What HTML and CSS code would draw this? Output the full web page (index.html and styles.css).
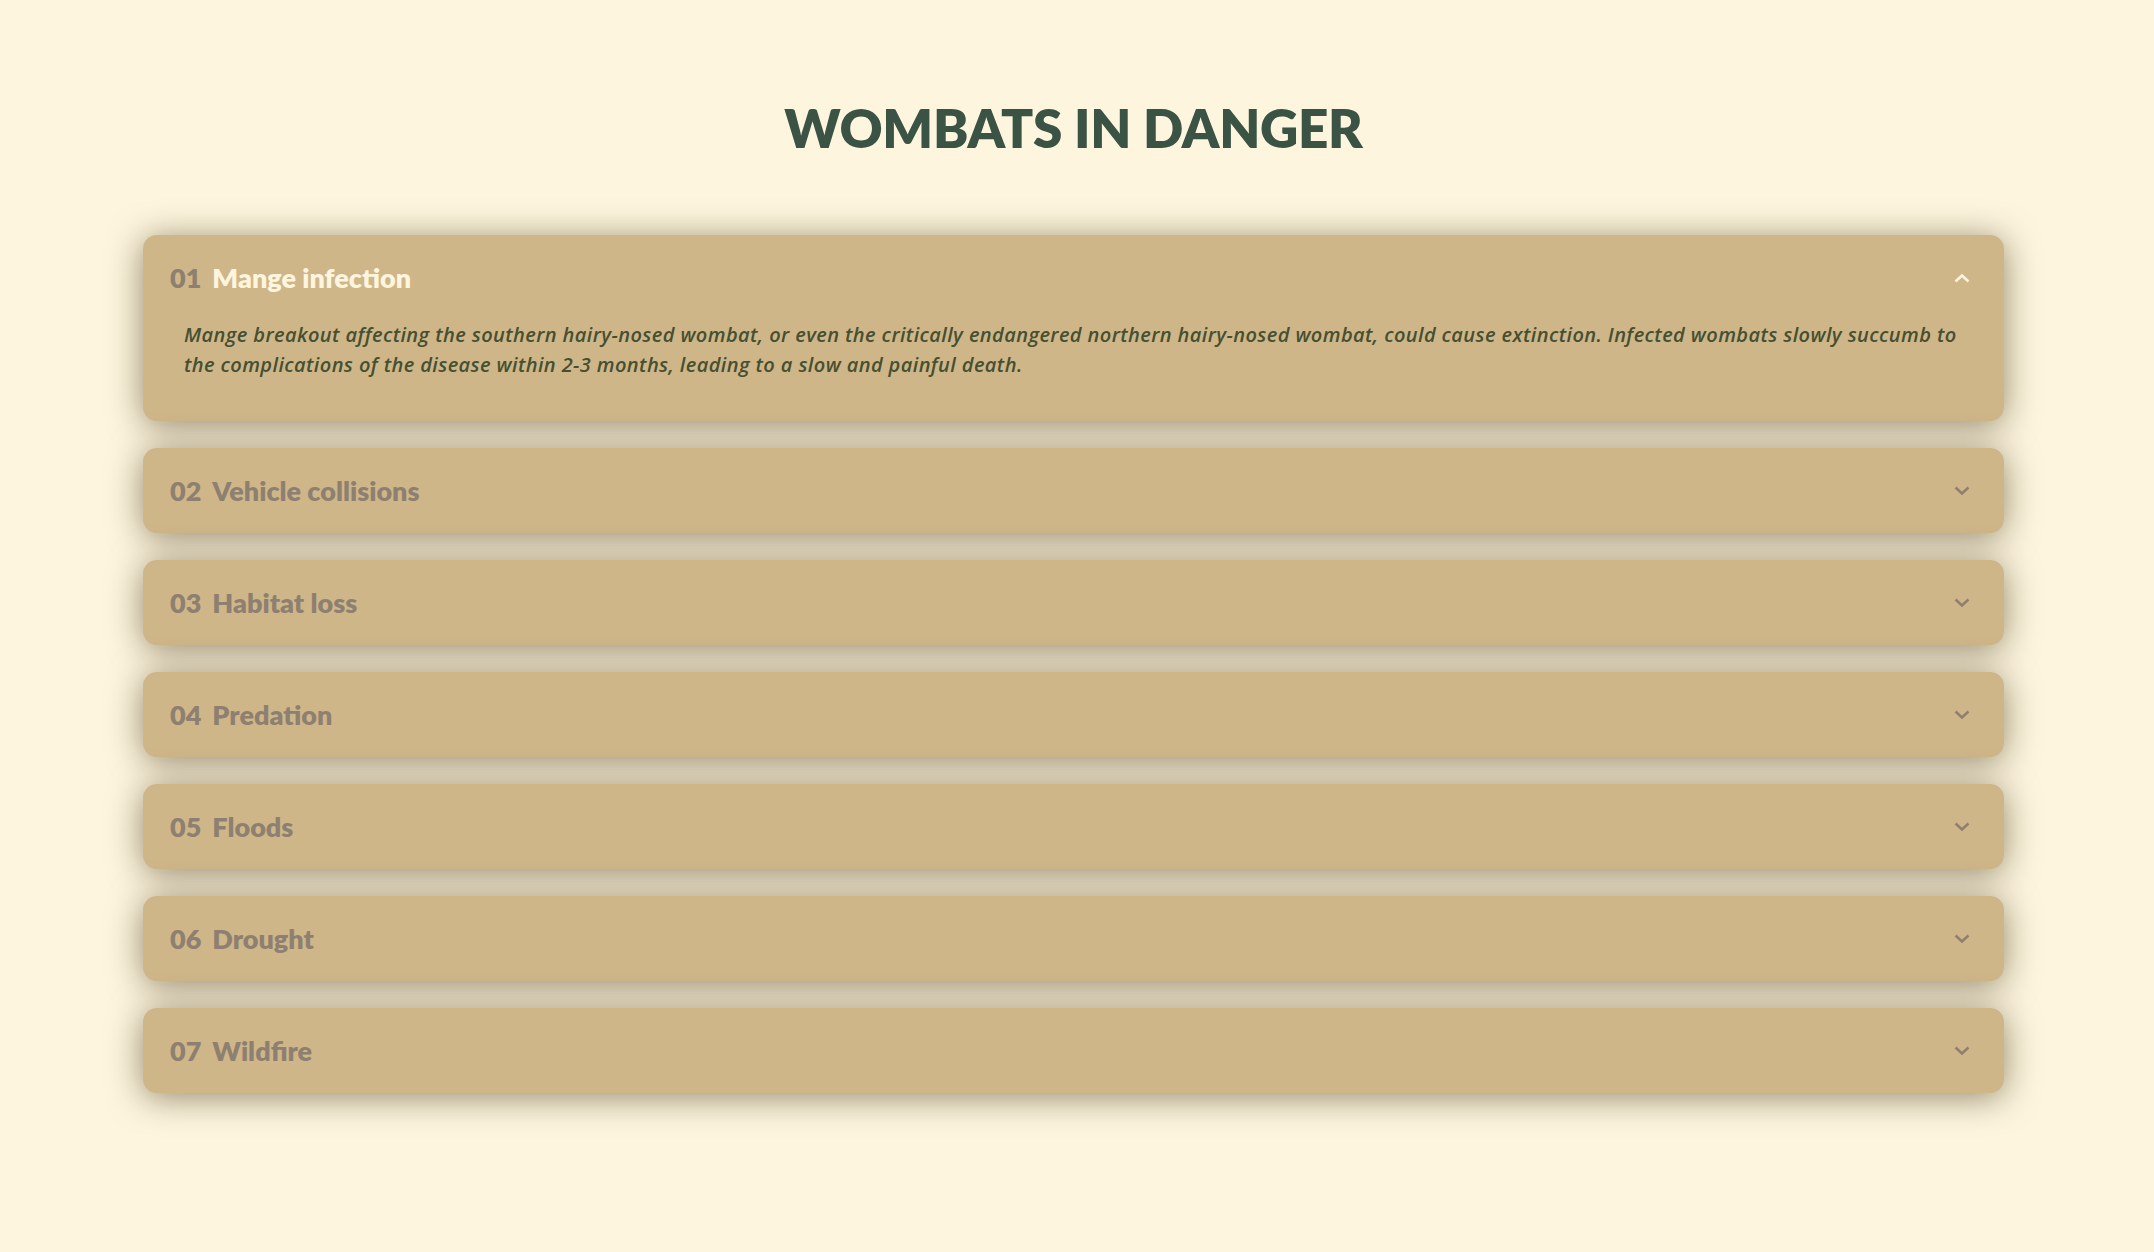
FILE: index.html
```html
<!DOCTYPE html>
<html lang="en">
<head>
<meta charset="utf-8">
<title>Wombats in Danger</title>
<link rel="stylesheet" href="styles.css">
</head>
<body>
<main class="page">
  <h1 class="page-title">WOMBATS IN DANGER</h1>
  <div class="accordion">
    <section class="item item--open">
      <div class="item-head">
        <span class="item-num">01</span>
        <span class="item-title">Mange infection</span>
        <svg class="chev" width="16" height="10" viewBox="0 0 16 10"><polyline points="1.5,8.5 8,2.5 14.5,8.5" fill="none" stroke="currentColor" stroke-width="2.6"/></svg>
      </div>
      <p class="item-body">Mange breakout affecting the southern hairy-nosed wombat, or even the critically endangered northern hairy-nosed wombat, could cause extinction. Infected wombats slowly succumb to the complications of the disease within 2-3 months, leading to a slow and painful death.</p>
    </section>
    <section class="item">
      <div class="item-head">
        <span class="item-num">02</span>
        <span class="item-title">Vehicle collisions</span>
        <svg class="chev" width="16" height="10" viewBox="0 0 16 10"><polyline points="1.5,1.5 8,7.5 14.5,1.5" fill="none" stroke="currentColor" stroke-width="2.6"/></svg>
      </div>
    </section>
    <section class="item">
      <div class="item-head">
        <span class="item-num">03</span>
        <span class="item-title">Habitat loss</span>
        <svg class="chev" width="16" height="10" viewBox="0 0 16 10"><polyline points="1.5,1.5 8,7.5 14.5,1.5" fill="none" stroke="currentColor" stroke-width="2.6"/></svg>
      </div>
    </section>
    <section class="item">
      <div class="item-head">
        <span class="item-num">04</span>
        <span class="item-title">Predation</span>
        <svg class="chev" width="16" height="10" viewBox="0 0 16 10"><polyline points="1.5,1.5 8,7.5 14.5,1.5" fill="none" stroke="currentColor" stroke-width="2.6"/></svg>
      </div>
    </section>
    <section class="item">
      <div class="item-head">
        <span class="item-num">05</span>
        <span class="item-title">Floods</span>
        <svg class="chev" width="16" height="10" viewBox="0 0 16 10"><polyline points="1.5,1.5 8,7.5 14.5,1.5" fill="none" stroke="currentColor" stroke-width="2.6"/></svg>
      </div>
    </section>
    <section class="item">
      <div class="item-head">
        <span class="item-num">06</span>
        <span class="item-title">Drought</span>
        <svg class="chev" width="16" height="10" viewBox="0 0 16 10"><polyline points="1.5,1.5 8,7.5 14.5,1.5" fill="none" stroke="currentColor" stroke-width="2.6"/></svg>
      </div>
    </section>
    <section class="item">
      <div class="item-head">
        <span class="item-num">07</span>
        <span class="item-title">Wildfire</span>
        <svg class="chev" width="16" height="10" viewBox="0 0 16 10"><polyline points="1.5,1.5 8,7.5 14.5,1.5" fill="none" stroke="currentColor" stroke-width="2.6"/></svg>
      </div>
    </section>
  </div>
</main>
</body>
</html>
```
FILE: styles.css
```css
html, body {
  margin: 0;
  padding: 0;
  background: #fdf5de;
}
body {
  font-family: "Lato", "Open Sans", sans-serif;
  min-height: 1252px;
}
.page {
  padding: 92px 150px 0 143px;
}
.page-title {
  margin: 0;
  text-align: center;
  font-family: "Lato", sans-serif;
  font-weight: 800;
  font-size: 53px;
  line-height: 72px;
  color: #3a5344;
  letter-spacing: -0.3px;
}
.accordion {
  margin-top: 71px;
  display: flex;
  flex-direction: column;
  gap: 27px;
}
.item {
  background: #cfb689;
  border-radius: 14px;
  box-shadow: 0 4px 34px rgba(60, 45, 15, 0.55);
}
.item-head {
  height: 85px;
  display: flex;
  align-items: center;
  padding: 0 34px 0 27px;
  font-family: "Lato", sans-serif;
  font-weight: 800;
  font-size: 27px;
  color: #8e8070;
}
.item-num {
  margin-right: 11px;
}
.item-title {
  flex: 1;
}
.item--open .item-title {
  color: #fdf5de;
}
.chev {
  display: block;
  color: #8e8070;
}
.item--open .chev {
  color: #fdf5de;
}
.item-body {
  margin: 0;
  padding: 0 28px 41px 41px;
  font-family: "Open Sans", sans-serif;
  font-style: italic;
  font-weight: 600;
  font-size: 20px;
  letter-spacing: 0.4px;
  line-height: 30px;
  color: #465031;
}
```
